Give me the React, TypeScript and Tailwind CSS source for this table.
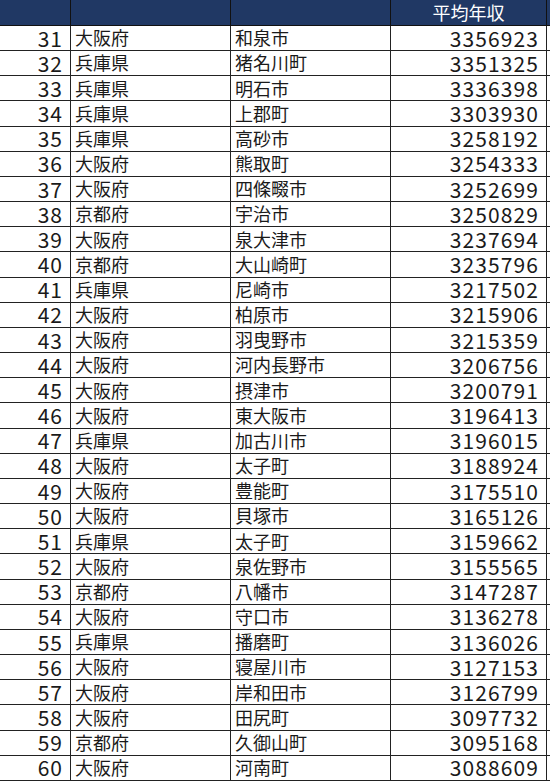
const rows: [number, string, string, number][] = [
  [31, "大阪府", "和泉市", 3356923],
  [32, "兵庫県", "猪名川町", 3351325],
  [33, "兵庫県", "明石市", 3336398],
  [34, "兵庫県", "上郡町", 3303930],
  [35, "兵庫県", "高砂市", 3258192],
  [36, "大阪府", "熊取町", 3254333],
  [37, "大阪府", "四條畷市", 3252699],
  [38, "京都府", "宇治市", 3250829],
  [39, "大阪府", "泉大津市", 3237694],
  [40, "京都府", "大山崎町", 3235796],
  [41, "兵庫県", "尼崎市", 3217502],
  [42, "大阪府", "柏原市", 3215906],
  [43, "大阪府", "羽曳野市", 3215359],
  [44, "大阪府", "河内長野市", 3206756],
  [45, "大阪府", "摂津市", 3200791],
  [46, "大阪府", "東大阪市", 3196413],
  [47, "兵庫県", "加古川市", 3196015],
  [48, "大阪府", "太子町", 3188924],
  [49, "大阪府", "豊能町", 3175510],
  [50, "大阪府", "貝塚市", 3165126],
  [51, "兵庫県", "太子町", 3159662],
  [52, "大阪府", "泉佐野市", 3155565],
  [53, "京都府", "八幡市", 3147287],
  [54, "大阪府", "守口市", 3136278],
  [55, "兵庫県", "播磨町", 3136026],
  [56, "大阪府", "寝屋川市", 3127153],
  [57, "大阪府", "岸和田市", 3126799],
  [58, "大阪府", "田尻町", 3097732],
  [59, "京都府", "久御山町", 3095168],
  [60, "大阪府", "河南町", 3088609],
];

const cols = "grid grid-cols-[71px_160px_160px_156px]";
const cell = "border-r border-[#222] flex items-center whitespace-nowrap";

export default function App() {
  return (
    <div
      className="w-[550px] h-[781px] bg-white text-[#1a1a1a]"
      style={{ fontFamily: '"Noto Sans CJK JP", "Noto Sans", sans-serif' }}
    >
      {/* header */}
      <div className={`${cols} h-[26px] bg-[#203864] border-b border-[#111]`}>
        <div className="border-r border-[#111]" />
        <div className="border-r border-[#111]" />
        <div className="border-r border-[#111]" />
        <div className="border-r border-[#111] flex items-center justify-center text-white text-[18px] leading-[1.1]">
          平均年収
        </div>
      </div>

      {/* body */}
      <div className="grid grid-rows-[repeat(30,1fr)] h-[755px]">
        {rows.map(([rank, pref, city, income]) => (
          <div key={rank} className={`${cols} border-b border-[#222]`}>
            <div className={`${cell} justify-end pr-[7px] text-[21px] leading-[1.1] tracking-[1px]`}>
              {rank}
            </div>
            <div className={`${cell} pl-[4px] text-[18px] leading-[1.1]`}>{pref}</div>
            <div className={`${cell} pl-[4px] text-[18px] leading-[1.1]`}>{city}</div>
            <div className={`${cell} justify-end pr-[7px] text-[21px] leading-[1.1] tracking-[1.1px]`}>
              {income}
            </div>
          </div>
        ))}
      </div>
    </div>
  );
}
